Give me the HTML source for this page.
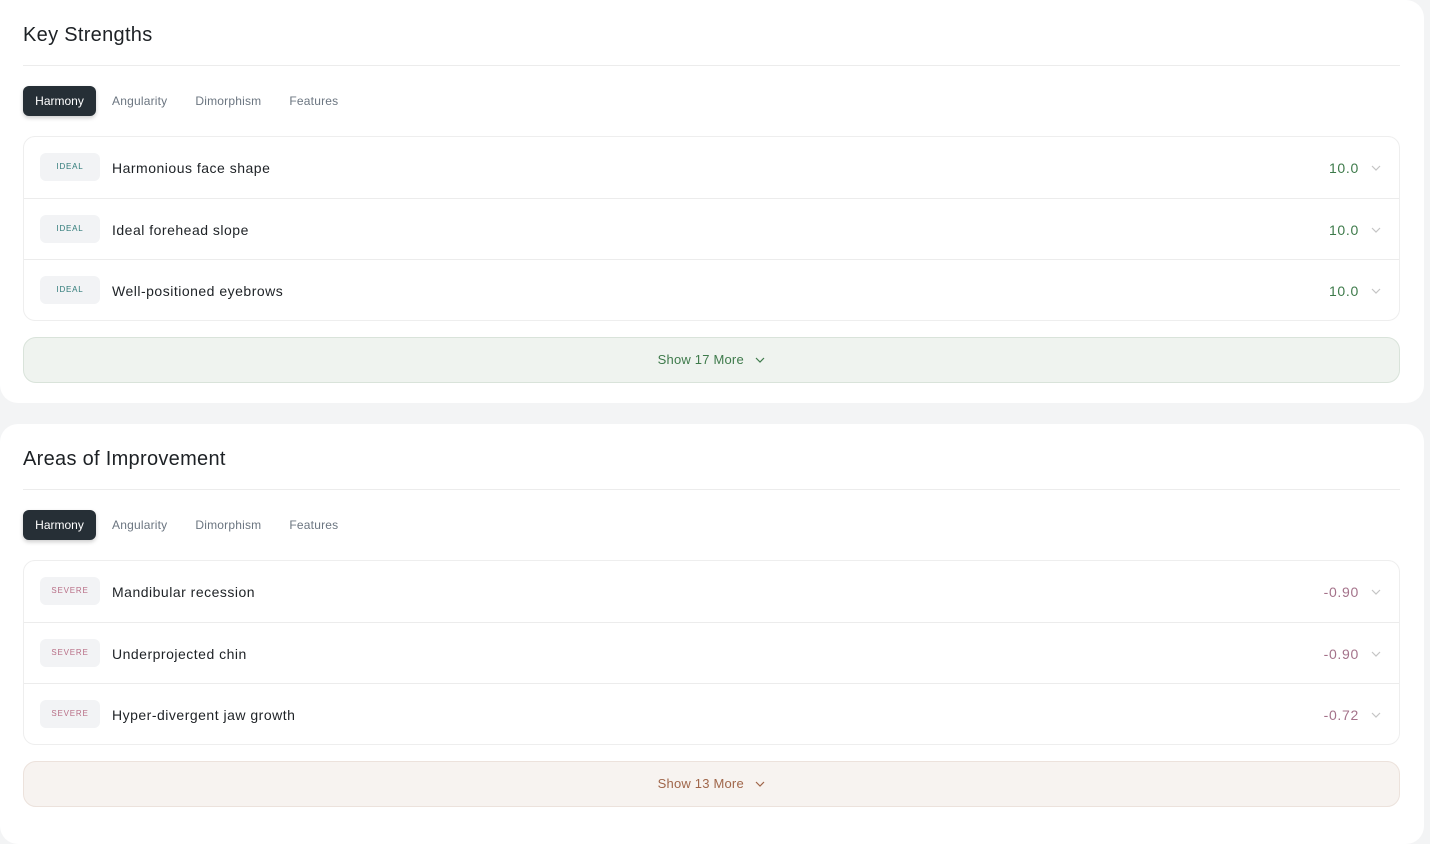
<!DOCTYPE html>
<html><head><style>
*{box-sizing:border-box;margin:0;padding:0}
body{width:1430px;height:826px;background:#f3f4f5;font-family:"Liberation Sans",sans-serif;position:relative;overflow:hidden}
.card{position:absolute;left:0;width:1424px;background:#fff;border-radius:18px;}
.title{position:absolute;left:23px;top:24px;font-size:20px;color:#1d2125;letter-spacing:.3px}
.div{position:absolute;left:23px;right:24px;top:65px;height:1px;background:#ececec}
.tabs{position:absolute;left:23px;top:86px;display:flex;font-size:12px;color:#6b7580;letter-spacing:.2px}
.tab{height:30px;line-height:30px;padding:0 12px;margin-right:4px}
.tab.on{background:#262f36;color:#fff;border-radius:6px;box-shadow:0 2px 4px rgba(0,0,0,.2);width:73px;text-align:center;padding:0;letter-spacing:0}
.tbl{position:absolute;left:23px;width:1377px;top:136px;border:1px solid #eeeeee;border-radius:12px;overflow:hidden}
.row{height:61px;border-top:1px solid #ececec;position:relative}
.row:first-child{border-top:none}
.badge{position:absolute;left:16px;top:16px;width:60px;height:28px;background:#f2f3f5;border-radius:6px;font-size:8px;letter-spacing:.8px;text-align:center;line-height:28px}
.name{position:absolute;left:88px;top:23px;font-size:14px;color:#1e2226;letter-spacing:.5px}
.val{position:absolute;right:40px;top:23px;font-size:14px;letter-spacing:.7px}
.chev{position:absolute;right:18px;top:27px}
.more{position:absolute;left:23px;width:1377px;height:46px;border-radius:13px;font-size:13px;text-align:center;line-height:44px;letter-spacing:.2px}
</style></head><body>
<div class="card" style="top:0;height:403px;border-top-left-radius:0">
<div class="title">Key Strengths</div><div class="div"></div>
<div class="tabs"><div class="tab on">Harmony</div><div class="tab">Angularity</div><div class="tab">Dimorphism</div><div class="tab">Features</div></div>
<div class="tbl">
<div class="row"><div class="badge" style="color:#2f7a78">IDEAL</div><div class="name">Harmonious face shape</div><div class="val" style="color:#3d7a4a">10.0</div><svg class="chev" width="10" height="8" viewBox="0 0 10 8"><path d="M1 2l4 4 4-4" fill="none" stroke="#c4c4c4" stroke-width="1.2"/></svg></div>
<div class="row"><div class="badge" style="color:#2f7a78">IDEAL</div><div class="name">Ideal forehead slope</div><div class="val" style="color:#3d7a4a">10.0</div><svg class="chev" width="10" height="8" viewBox="0 0 10 8"><path d="M1 2l4 4 4-4" fill="none" stroke="#c4c4c4" stroke-width="1.2"/></svg></div>
<div class="row"><div class="badge" style="color:#2f7a78">IDEAL</div><div class="name">Well-positioned eyebrows</div><div class="val" style="color:#3d7a4a">10.0</div><svg class="chev" width="10" height="8" viewBox="0 0 10 8"><path d="M1 2l4 4 4-4" fill="none" stroke="#c4c4c4" stroke-width="1.2"/></svg></div>
</div>
<div class="more" style="top:337px;background:#eff3ef;border:1px solid #d9e3da;color:#3e7a4b">Show 17 More &nbsp;&nbsp;<svg width="10" height="8" viewBox="0 0 10 8"><path d="M1 2l4 4 4-4" fill="none" stroke="#3e7a4b" stroke-width="1.2"/></svg></div>
</div>
<div class="card" style="top:424px;height:420px">
<div class="title">Areas of Improvement</div><div class="div"></div>
<div class="tabs"><div class="tab on">Harmony</div><div class="tab">Angularity</div><div class="tab">Dimorphism</div><div class="tab">Features</div></div>
<div class="tbl">
<div class="row"><div class="badge" style="color:#b86e86">SEVERE</div><div class="name">Mandibular recession</div><div class="val" style="color:#a4728a">-0.90</div><svg class="chev" width="10" height="8" viewBox="0 0 10 8"><path d="M1 2l4 4 4-4" fill="none" stroke="#c4c4c4" stroke-width="1.2"/></svg></div>
<div class="row"><div class="badge" style="color:#b86e86">SEVERE</div><div class="name">Underprojected chin</div><div class="val" style="color:#a4728a">-0.90</div><svg class="chev" width="10" height="8" viewBox="0 0 10 8"><path d="M1 2l4 4 4-4" fill="none" stroke="#c4c4c4" stroke-width="1.2"/></svg></div>
<div class="row"><div class="badge" style="color:#b86e86">SEVERE</div><div class="name">Hyper-divergent jaw growth</div><div class="val" style="color:#a4728a">-0.72</div><svg class="chev" width="10" height="8" viewBox="0 0 10 8"><path d="M1 2l4 4 4-4" fill="none" stroke="#c4c4c4" stroke-width="1.2"/></svg></div>
</div>
<div class="more" style="top:337px;background:#f7f3f0;border:1px solid #ece2dc;color:#a0664a">Show 13 More &nbsp;&nbsp;<svg width="10" height="8" viewBox="0 0 10 8"><path d="M1 2l4 4 4-4" fill="none" stroke="#a0664a" stroke-width="1.2"/></svg></div>
</div>
</body></html>
